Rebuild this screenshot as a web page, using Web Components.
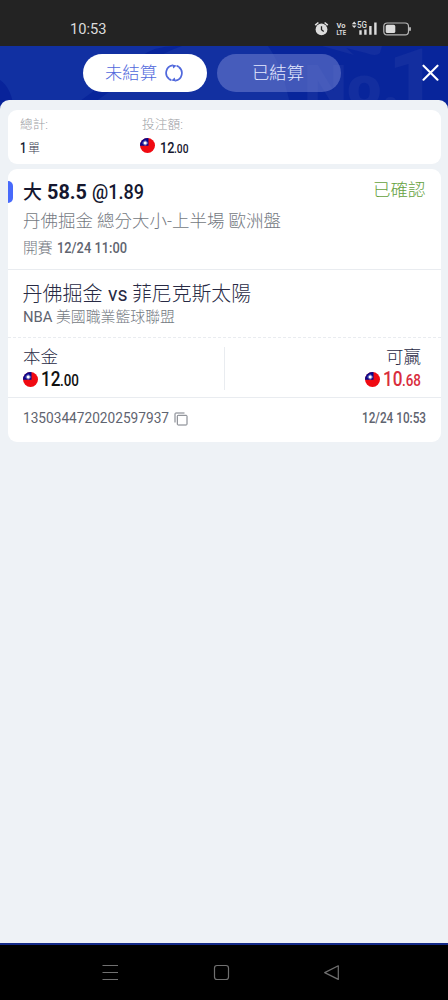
<!DOCTYPE html>
<html lang="zh-Hant">
<head>
<meta charset="utf-8">
<title>注單</title>
<style>
html,body{margin:0;height:100%;background:#000}
body{font-family:Roboto,"Noto Sans CJK TC",sans-serif;overflow:hidden}
</style>
</head>
<body>
<bet-app></bet-app>
<script>
const define = (name, html, setup) => customElements.define(name, class extends HTMLElement {
  constructor() {
    super();
    const t = document.createElement('template');
    t.innerHTML = html;
    this.attachShadow({ mode: 'open' }).append(t.content.cloneNode(true));
  }
  connectedCallback() { if (setup) setup(this); }
});

/* One line of text, condensed or widened to a given width */
define('fit-text', `<style>
:host{display:block;flex:none;white-space:nowrap;line-height:1.2}
span{display:inline-block;transform-origin:0 50%;white-space:nowrap}
</style><span><slot></slot></span>`, el => {
  const w = +el.getAttribute('w');
  el.style.width = w + 'px';
  const s = el.shadowRoot.querySelector('span');
  const fit = () => { const n = s.offsetWidth && parseFloat(getComputedStyle(s).width); if (n) s.style.transform = `scaleX(${w / n})`; };
  fit();
  requestAnimationFrame(fit);
});

define('tw-flag', `<style>:host{display:block;flex:none;width:15px;height:15px}svg{display:block}</style>
<svg width="15" height="15" viewBox="0 0 15 15"><defs><clipPath id="c"><circle cx="7.5" cy="7.5" r="7.5"/></clipPath></defs>
<g clip-path="url(#c)"><path fill="#f00a12" d="M0 0h15v15H0z"/><path fill="#08088c" d="M0 0h8.5v7.8H0z"/><circle cx="5.2" cy="5" r="1.7" fill="#fff"/><circle cx="5.2" cy="5" r="2.2" fill="none" stroke="#b9bfed" stroke-width=".7" stroke-dasharray=".8 .5"/></g></svg>`);

define('status-bar', `<style>
:host{display:flex;height:46px;background:#232323;color:#dcdcdc;box-sizing:border-box;padding:12px 37px 0 69.5px;justify-content:space-between;align-items:flex-start}
fit-text{font-size:15.5px;line-height:34px;height:34px}svg{display:block}
</style><fit-text w="36.5">10:53</fit-text>
<svg width="97" height="34" viewBox="314 12 97 34" fill="none" stroke="#dcdcdc">
<circle cx="321.5" cy="29.4" r="5.9" fill="#dcdcdc" stroke="none"/><path d="M315.2 25.2l3.2-2.7M327.8 25.2l-3.2-2.7" stroke-width="1.6"/><path d="M321.5 26.2v3.5l2.2 1.7" stroke="#232323" stroke-width="1.3"/>
<g fill="#dcdcdc" stroke="none" font-family="Roboto" font-weight="700"><text x="336.5" y="27.8" font-size="7.6" textLength="9" lengthAdjust="spacingAndGlyphs">Vo</text><text x="336.5" y="34.8" font-size="8" textLength="9.5" lengthAdjust="spacingAndGlyphs">LTE</text><text x="357" y="28.3" font-size="8.5" font-weight="500" textLength="10" lengthAdjust="spacingAndGlyphs">5G</text>
<path d="M351.8 24.3l2.4-2.7 2.4 2.7zM351.8 25.6l2.4 2.4 2.4-2.4z"/><path d="M359.3 30.3h2.4v4.5h-2.4zM364.2 29.5h2.4v5.3h-2.4zM369.2 26h2.4v8.8h-2.4zM374.2 22.5h2.4v12.3h-2.4z"/></g>
<rect x="383.8" y="23" width="24.7" height="11.8" rx="3.4" stroke-width="1.2" stroke="#b8b8b8"/><rect x="385.7" y="24.8" width="9.6" height="8.2" rx="1.6" fill="#dcdcdc" stroke="none"/><path d="M410 27.2v3.6" stroke-width="1.5"/></svg>`);

define('tab-pill', `<style>
:host{display:flex;flex:none;width:124px;height:37.5px;border-radius:19px;align-items:center;justify-content:center;gap:7.5px;box-sizing:border-box;color:#e6eaff;background:rgba(113,130,210,.55);font-size:17.3px;font-weight:300;padding-right:1px}
:host([active]){background:#fff;color:#5068dc;padding-right:2px}
::slotted(fit-text){margin-top:2px}
</style><slot></slot>`);

define('top-bar', `<style>
:host{display:grid;height:65px;background:#1130a2;overflow:hidden}
.art,.row{grid-area:1/1}.art{display:block}
.row{display:flex;height:37.5px;padding:8px 9px 0 83px;gap:9.5px;align-items:center;z-index:1}
.close{margin-left:auto;display:block}
</style>
<svg class="art" width="448" height="65" viewBox="0 46 448 65">
<path d="M76 104L140 57Q154 46 176 46H448V111H70Z" fill="#08259b"/>
<path d="M92 104L160 56Q168 51 182 46H268Q278 60 284 80L292 111H84Z" fill="#1230a1"/>
<path d="M0 80Q12 88 14 111H0Z" fill="#08239a"/>
<path d="M322 46h22l10 9zM338 46h44l-2 7q-4 4-14 0z" fill="#132e9f"/>
<g font-family="Roboto" font-weight="900" fill="#132e9f"><text x="304" y="106" font-size="58" textLength="96" lengthAdjust="spacingAndGlyphs">No.</text><text x="388" y="108" font-size="84">1</text></g></svg>
<div class="row"><tab-pill active><fit-text w="52">未結算</fit-text>
<svg width="18" height="18" viewBox="0 0 18 18" fill="none" stroke="#5068dc" stroke-width="1.7"><path d="M7.6 1.4A7.6 7.6 0 0 0 4.2 15M10.4 16.6A7.6 7.6 0 0 0 13.8 3"/><path d="M7 .4l4.6 1.1-3.2 3.1zM11 17.6l-4.6-1.1 3.2-3.1z" fill="#5068dc" stroke="none"/><path d="M11.6 1.8q1.3.5 2.2 1.2M6.4 16.2q-1.3-.5-2.2-1.2"/></svg></tab-pill>
<tab-pill><fit-text w="52">已結算</fit-text></tab-pill>
<svg class="close" width="17" height="17" viewBox="0 0 17 17" stroke="#fff" stroke-width="2.1" stroke-linecap="round"><path d="M1.5 1.7l14 14M15.5 1.7l-14 14"/></svg></div>`);

define('summary-card', `<style>
:host{display:grid;grid-template-columns:122px 1fr;grid-template-rows:20px 24px;height:54px;box-sizing:border-box;background:#fff;border-radius:9px;padding:5px 0 5px 12.5px;color:#15172f}
.l{font-size:12.5px;font-weight:300;color:#9b9da3;line-height:20px}
.v{display:flex;align-items:center;height:24px;font-weight:500;font-size:14.5px}
.unit{font-size:12px;font-weight:300;margin-left:1px;color:#383a4e}
tw-flag{margin:-1px 5px 2px -2.5px}fit-text{margin-top:4px}
</style>
<fit-text class="l" w="28" style="margin:0">總計:</fit-text><fit-text class="l" w="41" style="margin:0">投注額:</fit-text>
<div class="v"><fit-text w="6.5">1</fit-text><fit-text class="unit" w="12">單</fit-text></div>
<div class="v"><tw-flag></tw-flag><fit-text w="14.5">12</fit-text><fit-text w="14.5" style="font-size:12px;margin-top:5px">.00</fit-text></div>`);

define('bet-card', `<style>
:host{display:block;height:273px;box-sizing:border-box;background:#fff;border-radius:9px;color:#15172f;font-weight:300}
section{box-sizing:border-box;padding:0 15px}
.row{display:flex;align-items:center}
.a{height:100.5px;border-bottom:1.5px solid #e9ecf0;padding-top:10px}
.b{height:68px;border-bottom:1.5px dashed #e9ecf0;padding-top:12px}
.c{height:60px;border-bottom:1.5px solid #e9ecf0;display:grid;grid-template-columns:201px 1px 1fr;padding:9px 20px 7px 15px}
.c i{background:#e9ecf0}
.d{height:43px;padding-top:10px}
.mark{width:5px;height:22.5px;background:#486afb;border-radius:0 5px 5px 0;margin:0 10px 0 -15px}
.ok{color:#65a13d;font-size:17.3px;margin:-4px 0 0 auto}
.g{color:#747982}.m{font-weight:500}.t{color:#282a44}
.r{justify-content:flex-end}
</style>
<section class="a">
<div class="row" style="height:26px"><div class="mark"></div><fit-text w="19" style="font-size:19.5px;font-weight:500;margin-top:2px">大</fit-text><fit-text w="40" style="font-size:19.5px;font-weight:700;margin:2px 0 0 5.5px">58.5</fit-text><fit-text w="52" style="font-size:19.5px;font-weight:500;margin:2px 0 0 5px">@1.89</fit-text><fit-text w="52.5" class="ok">已確認</fit-text></div>
<div class="row g" style="height:30px;padding-top:1px"><fit-text w="258" style="font-size:17.3px">丹佛掘金 總分大小-上半場 歐洲盤</fit-text></div>
<div class="row g" style="height:26px"><fit-text w="29.5" style="font-size:14.7px">開賽</fit-text><fit-text w="70" style="font-size:14.3px;color:#5f6470;margin-left:5px" class="m">12/24 11:00</fit-text></div>
</section>
<section class="b">
<div class="row t" style="height:25px"><fit-text w="80" style="font-size:20px">丹佛掘金</fit-text><fit-text w="19.5" style="font-size:20px;font-weight:400;margin-left:5px">vs</fit-text><fit-text w="119" style="font-size:20px;margin-left:5px">菲尼克斯太陽</fit-text></div>
<div class="row g" style="height:22px"><fit-text w="29.5" style="font-size:15.3px;font-weight:400;color:#5f6470">NBA</fit-text><fit-text w="119" style="font-size:14.8px;margin:1px 0 0 3.5px">美國職業籃球聯盟</fit-text></div>
</section>
<section class="c">
<div><div class="row t" style="height:22px"><fit-text w="35" style="font-size:17.3px">本金</fit-text></div>
<div class="row m" style="height:21px;color:#111"><tw-flag></tw-flag><fit-text w="19.5" style="font-size:20px;margin-left:3px">12</fit-text><fit-text w="19" style="font-size:16px;margin:3px 0 0">.00</fit-text></div></div>
<i></i>
<div><div class="row r t" style="height:22px"><fit-text w="35" style="font-size:17.3px">可贏</fit-text></div>
<div class="row r m" style="height:21px;color:#d92d3d;margin-right:-.5px"><tw-flag></tw-flag><fit-text w="19.5" style="font-size:20px;margin-left:2.5px">10</fit-text><fit-text w="19" style="font-size:16px;margin:3px 0 0">.68</fit-text></div></div>
</section>
<section class="d"><div class="row" style="height:22px;color:#5f6470;font-weight:400"><fit-text w="146" style="font-size:14.2px">1350344720202597937</fit-text>
<svg style="margin-left:5px" width="14" height="14" viewBox="0 0 14 14" fill="none" stroke="#777b83" stroke-width="1"><path d="M1 10.5V1.8Q1 1 1.8 1H10.5"/><rect x="3.3" y="3.3" width="9.7" height="9.7" rx=".8"/></svg>
<fit-text w="64" class="m" style="font-size:14.2px;margin-left:auto">12/24 10:53</fit-text></div></section>`);

define('nav-bar', `<style>:host{display:block;height:57px;box-sizing:border-box;border-top:2px solid #142a88;background:#000}svg{display:block}</style>
<svg width="448" height="55" viewBox="0 945 448 55" fill="none" stroke="#707070" stroke-width="1.2" stroke-linejoin="round"><path d="M102.5 965.5H118M102.5 972.5H118M102.5 979.5H118"/><rect x="214.5" y="965.5" width="14" height="14" rx="2.5"/><path d="M338.3 965.8v13.6l-13.6-6.8z"/></svg>`);

define('bet-app', `<style>
:host{display:flex;flex-direction:column;width:448px;height:1000px;background:#000}
main{flex:1;box-sizing:border-box;margin-top:-11px;padding:10px 7.5px;background:#eef2f6;border-radius:9px 9px 0 0;display:flex;flex-direction:column;gap:5px;z-index:1}
</style><status-bar></status-bar><top-bar></top-bar><main><summary-card></summary-card><bet-card></bet-card></main><nav-bar></nav-bar>`);
</script>
</body>
</html>
